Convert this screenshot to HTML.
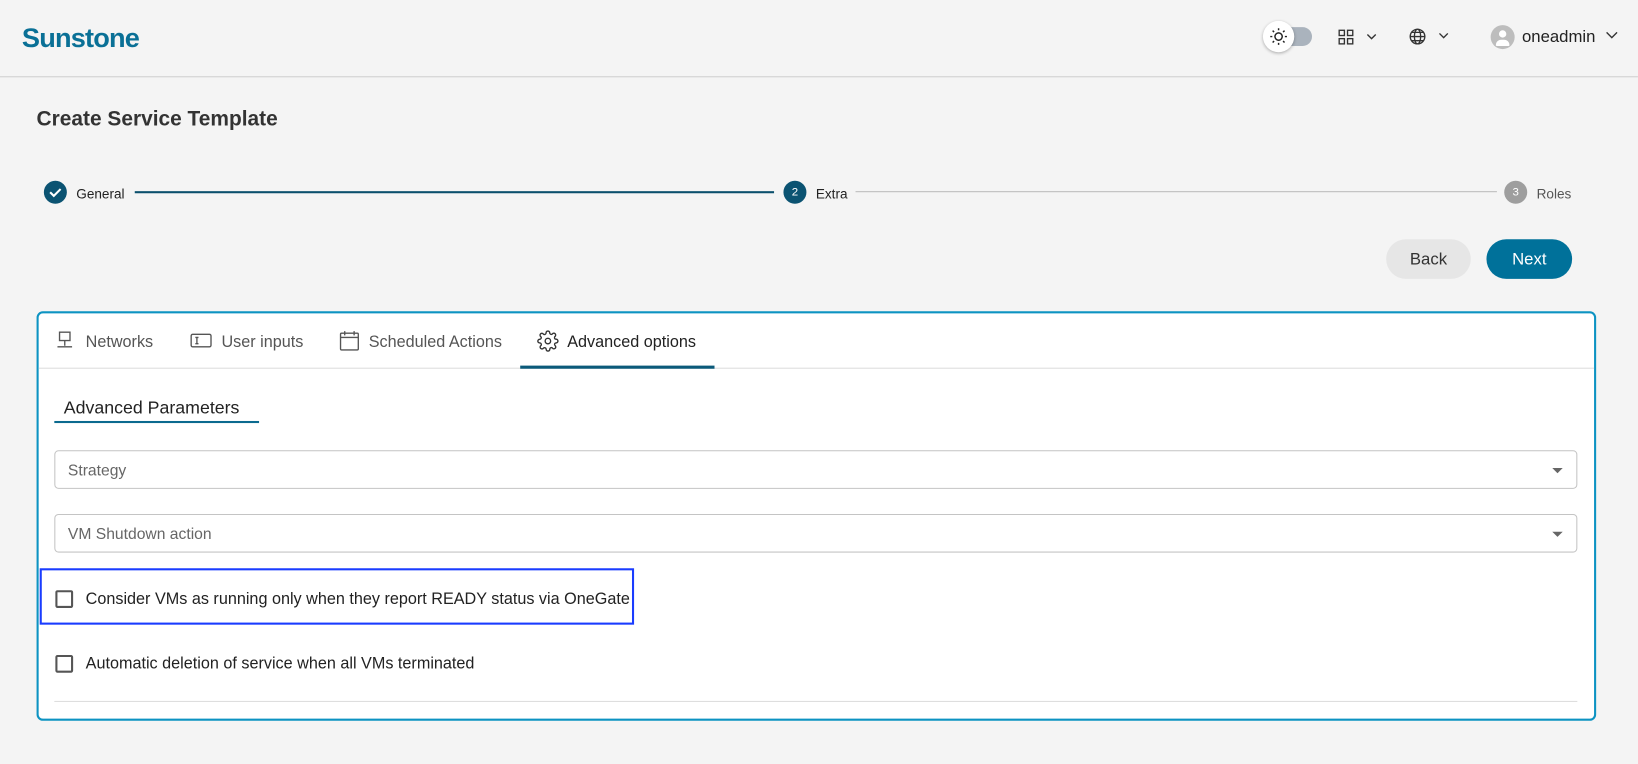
<!DOCTYPE html>
<html><head><meta charset="utf-8"><style>
*{box-sizing:border-box;margin:0;padding:0}
html,body{width:1638px;height:764px;overflow:hidden;background:#f4f4f4;font-family:"Liberation Sans",sans-serif;color:#222}
#w{position:absolute;left:0;top:0;width:1568px;height:731px;transform:scale(1.0446);transform-origin:0 0}
.a{position:absolute}
.hdr{left:0;top:0;width:1568px;height:74px;border-bottom:1px solid #cfcfcf}
.t{white-space:nowrap}
.circ{border-radius:50%;color:#fff;font-size:11px;text-align:center;line-height:22px;width:22px;height:22px}
.sel{left:52px;width:1458px;height:37px;border:1px solid #c4c4c4;border-radius:4px;background:#fff}
.sel span{position:absolute;left:12px;top:10px;font-size:15px;color:#666}
.sel i{position:absolute;right:13px;top:16px;border-left:5px solid transparent;border-right:5px solid transparent;border-top:5px solid #666}
.cb{width:17px;height:17px;border:2px solid #555;border-radius:2px}
.tab{font-size:15.5px;color:#555;top:319px}
</style></head><body><div id="w">
<div class="a hdr"></div>
<div class="a t" style="left:21px;top:21px;font-size:26px;font-weight:bold;color:#0a7096;letter-spacing:-0.8px">Sunstone</div>
<div class="a" style="left:1220px;top:26px;width:36px;height:18px;border-radius:9px;background:#aab3bd"></div>
<div class="a" style="left:1209px;top:20px;width:30px;height:30px;border-radius:50%;background:#fff;box-shadow:0 1px 3px rgba(0,0,0,.3)"></div>
<svg class="a" style="left:1215px;top:26px" width="18" height="18" viewBox="0 0 18 18" fill="none" stroke="#222" stroke-width="1.4"><circle cx="9" cy="9" r="3.5"/><path d="M9 1v2M9 15v2M1 9h2M15 9h2M3.3 3.3l1.4 1.4M13.3 13.3l1.4 1.4M3.3 14.7l1.4-1.4M13.3 4.7l1.4-1.4"/></svg>
<svg class="a" style="left:1281px;top:28px" width="40" height="16" viewBox="0 0 40 16" fill="none" stroke="#333" stroke-width="1.3"><rect x="1" y="1" width="5" height="5"/><rect x="9" y="1" width="5" height="5"/><rect x="1" y="9" width="5" height="5"/><rect x="9" y="9" width="5" height="5"/><path d="M28 5l4 4 4-4"/></svg>
<svg class="a" style="left:1349px;top:27px" width="42" height="18" viewBox="0 0 42 18" fill="none" stroke="#333" stroke-width="1.3"><circle cx="8" cy="8" r="7"/><ellipse cx="8" cy="8" rx="3" ry="7"/><path d="M1 8h14M2.5 4h11M2.5 12h11M29 5l4 4 4-4"/></svg>
<div class="a" style="left:1427px;top:24px;width:23px;height:23px;border-radius:50%;background:#bdbdbd;overflow:hidden"><div class="a" style="left:8px;top:5px;width:7px;height:7px;border-radius:50%;background:#fff"></div><div class="a" style="left:5px;top:14px;width:13px;height:6px;border-radius:6px 6px 1px 1px;background:#fff"></div></div>
<div class="a t" style="left:1457px;top:27px;font-size:16px;color:#222">oneadmin</div>
<svg class="a" style="left:1536px;top:29px" width="14" height="10" viewBox="0 0 14 10" fill="none" stroke="#333" stroke-width="1.3"><path d="M2 2l5 5 5-5"/></svg>

<div class="a t" style="left:35px;top:103px;font-size:20px;font-weight:bold;color:#333">Create Service Template</div>

<div class="a circ" style="left:42px;top:173px;background:#0b5372"><svg width="22" height="22" viewBox="0 0 22 22" fill="none" stroke="#fff" stroke-width="2"><path d="M6 11l3.5 3.5L16 8"/></svg></div>
<div class="a t" style="left:73px;top:178px;font-size:13px">General</div>
<div class="a" style="left:129px;top:183px;width:612px;height:2px;background:#0b4f6c"></div>
<div class="a circ" style="left:750px;top:173px;background:#0b5372">2</div>
<div class="a t" style="left:781px;top:178px;font-size:13px">Extra</div>
<div class="a" style="left:819px;top:183px;width:614px;height:1px;background:#bbb"></div>
<div class="a circ" style="left:1440px;top:173px;background:#9e9e9e">3</div>
<div class="a t" style="left:1471px;top:178px;font-size:13px;color:#555">Roles</div>

<div class="a" style="left:1327px;top:229px;width:81px;height:38px;border-radius:19px;background:#e6e6e6;text-align:center;line-height:40px;font-size:16px;color:#333">Back</div>
<div class="a" style="left:1423px;top:229px;width:82px;height:38px;border-radius:19px;background:#00719a;text-align:center;line-height:40px;font-size:16px;color:#fff">Next</div>

<div class="a" style="left:35px;top:298px;width:1493px;height:392px;border:2px solid #0d93c2;border-radius:6px;background:#fff"></div>
<div class="a" style="left:37px;top:352px;width:1489px;height:1px;background:#ddd"></div>
<svg class="a" style="left:54px;top:317px" width="16" height="18" viewBox="0 0 16 18" fill="none" stroke="#555" stroke-width="1.3"><rect x="3" y="1" width="10" height="8"/><path d="M8 9v5M1 15h14"/></svg>
<div class="a t tab" style="left:82px">Networks</div>
<svg class="a" style="left:182px;top:318px" width="21" height="16" viewBox="0 0 21 16" fill="none" stroke="#555" stroke-width="1.3"><rect x="1" y="2" width="19" height="12" rx="1.5"/><path d="M5 5h3M6.5 5v6M5 11h3"/></svg>
<div class="a t tab" style="left:212px">User inputs</div>
<svg class="a" style="left:325px;top:316px" width="19" height="20" viewBox="0 0 19 20" fill="none" stroke="#555" stroke-width="1.3"><rect x="1" y="3" width="17" height="16" rx="1"/><path d="M1 7h17M5 1v4M14 1v4"/></svg>
<div class="a t tab" style="left:353px">Scheduled Actions</div>
<svg class="a" style="left:514px;top:316px" width="21" height="21" viewBox="0 0 24 24" fill="none" stroke="#333" stroke-width="1.5"><circle cx="12" cy="12" r="3"/><path d="M19.4 15a1.7 1.7 0 00.3 1.8l.1.1a2 2 0 11-2.8 2.8l-.1-.1a1.7 1.7 0 00-1.8-.3 1.7 1.7 0 00-1 1.5V21a2 2 0 11-4 0v-.1a1.7 1.7 0 00-1.1-1.5 1.7 1.7 0 00-1.800.3l-.1.1a2 2 0 11-2.8-2.8l.1-.1a1.7 1.7 0 00.3-1.8 1.7 1.7 0 00-1.5-1H3a2 2 0 110-4h.1a1.7 1.7 0 001.5-1.1 1.7 1.7 0 00-.3-1.8l-.1-.1a2 2 0 112.8-2.8l.1.1a1.7 1.7 0 001.8.3H9a1.7 1.7 0 001-1.5V3a2 2 0 114 0v.1a1.7 1.7 0 001 1.5 1.7 1.7 0 001.8-.3l.1-.1a2 2 0 112.8 2.8l-.1.1a1.7 1.7 0 00-.3 1.8V9a1.7 1.7 0 001.5 1H21a2 2 0 110 4h-.1a1.7 1.7 0 00-1.5 1z"/></svg>
<div class="a t tab" style="left:543px;color:#222">Advanced options</div>
<div class="a" style="left:498px;top:350px;width:186px;height:3px;background:#0b5a7a"></div>

<div class="a t" style="left:61px;top:381px;font-size:17px;color:#222">Advanced Parameters</div>
<div class="a" style="left:52px;top:403px;width:196px;height:2px;background:#0b6a8f"></div>

<div class="a sel" style="top:431px"><span>Strategy</span><i></i></div>
<div class="a sel" style="top:492px"><span>VM Shutdown action</span><i></i></div>

<div class="a" style="left:38px;top:544px;width:569px;height:54px;border:2px solid #1a3cff"></div>
<div class="a cb" style="left:53px;top:565px"></div>
<div class="a t" style="left:82px;top:565px;font-size:15.5px">Consider VMs as running only when they report READY status via OneGate</div>
<div class="a cb" style="left:53px;top:627px"></div>
<div class="a t" style="left:82px;top:627px;font-size:15.5px">Automatic deletion of service when all VMs terminated</div>
<div class="a" style="left:52px;top:671px;width:1458px;height:1px;background:#ddd"></div>
</div></body></html>
